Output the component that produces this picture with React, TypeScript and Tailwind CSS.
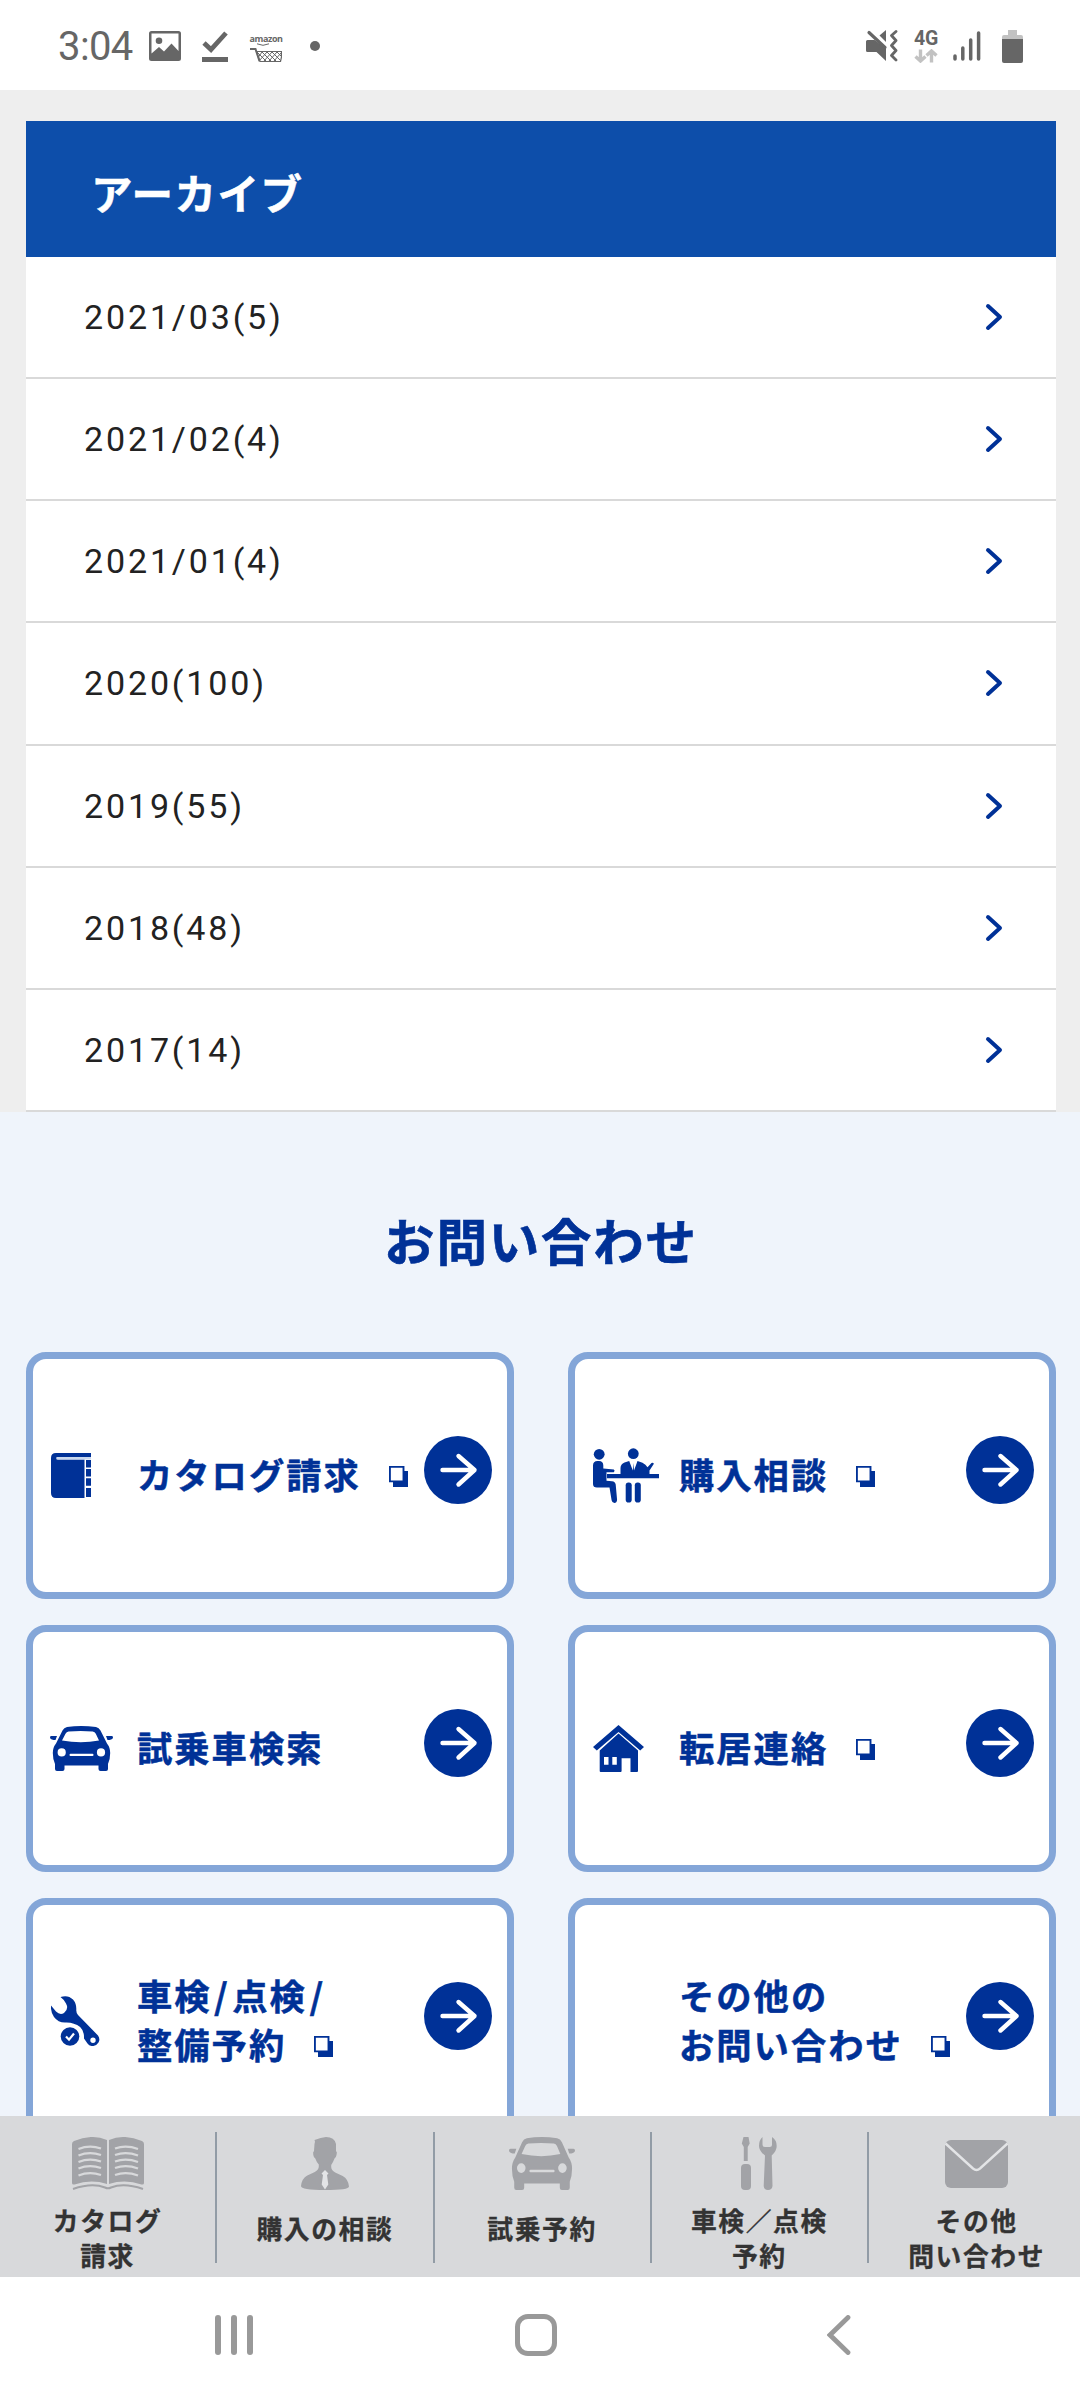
import React from 'react';

const archives = [
    '2021/03(5)',
    '2021/02(4)',
    '2021/01(4)',
    '2020(100)',
    '2019(55)',
    '2018(48)',
    '2017(14)',
];

/* ---------- Status bar ---------- */

const AmazonCart = () => (
    <div className="flex flex-col items-center w-8 text-[#666]">
        <span className="font-['Open_Sans',sans-serif] text-[9px] leading-[8px] font-bold tracking-[-0.4px]">amazon</span>
        <svg viewBox="0 0 32 19" className="w-8 h-[19px]" fill="none" stroke="currentColor">
            <path d="M7 0.8q6 3 12 0" strokeWidth="1" />
            <path d="M0 6h5.5l4 12.3" strokeWidth="2" />
            <path d="M6.500 8.500H31.500V14l-1 4.500H10z" strokeWidth="1.200" />
            <path d="M7 9l9 9M12 9l9 9M17 9l9 9M22 9l9 9M27 9l4 4M12 9l-3.500 5M17 9l-8 9M22 9l-8 9M27 9l-8 9M31 10l-7 8" strokeWidth="1" />
        </svg>
    </div>
);

const StatusBar = () => (
    <header className="h-[90px] shrink-0 bg-white flex items-center justify-between pl-[58px] pr-[57px] pt-[2px] text-[#666]">
        <div className="flex items-center">
            <span className="font-[Roboto,sans-serif] text-[40px] leading-[40px] w-[91px] tracking-[-0.6px] pt-[2px]">3:04</span>
            <svg viewBox="0 0 32 30" className="w-8 h-[30px]">
                <path fill="currentColor" fillRule="evenodd" d="M2.500 0h27A2.500 2.500 0 0 1 32 2.500v25a2.500 2.500 0 0 1-2.500 2.500h-27A2.500 2.500 0 0 1 0 27.500v-25A2.500 2.500 0 0 1 2.500 0zM2.500 2.500v20L10 16l5 4.500 7.500-8 7 7.500V2.500zM10 6.500a3.300 3.300 0 1 1 0 6.600 3.300 3.300 0 0 1 0-6.600z" />
            </svg>
            <svg viewBox="0 0 26 31" className="w-[26px] h-[31px] ml-[21px]">
                <path d="M2 12l7 6.500L24 2" fill="none" stroke="currentColor" strokeWidth="4.800" />
                <path d="M0 26h26v5H0z" fill="currentColor" />
            </svg>
            <div className="ml-[22px] mt-1"><AmazonCart /></div>
            <span className="ml-7 w-[10px] h-[10px] rounded-full bg-[#666]" />
        </div>
        <div className="flex items-center">
            <svg viewBox="0 0 32 32" className="w-8 h-8" fill="currentColor">
                <path d="M1.500 10H8.500L20 18.500V31L10.500 22H1.500Q0 22 0 20.500v-9Q0 10 1.500 10z" />
                <path d="M20 0v12l-6.500-6.500z" />
                <path d="M3 2.500l16 15" stroke="currentColor" strokeWidth="3.200" strokeLinecap="round" />
                <path d="M30 1.500l-4.500 4 4.500 5-4.500 5 4.500 5-4.500 5 4.500 4.500" fill="none" stroke="currentColor" strokeWidth="2.800" strokeLinecap="round" strokeLinejoin="round" />
            </svg>
            <div className="flex flex-col items-center w-6 ml-[16px] mr-px">
                <span className="font-[Roboto,sans-serif] text-[19.500px] leading-[17px] font-bold tracking-[-0.3px]">4G</span>
                <svg viewBox="0 0 24 14" className="w-6 h-[14px] mt-[2px]" fill="none" stroke="#c2c2c2" strokeWidth="3.400">
                    <path d="M6.500 0.500v11M1.500 7.500l5 4.500 5-4.500M17.500 13.500v-11M12.500 6.500l5-4.500 5 4.500" />
                </svg>
            </div>
            <svg viewBox="0 0 28 30" className="w-7 h-[30px] ml-[14px]" stroke="currentColor" strokeWidth="3.500" strokeLinecap="round">
                <path d="M2 25v3M9.800 17v11M17.700 9v19M25.600 2v26" />
            </svg>
            <svg viewBox="0 0 21 33" className="w-[21px] h-[33px] ml-[21px]">
                <path d="M6 0h9v5h4q2 0 2 2v3H0V7q0-2 2-2h4z" fill="#c2c2c2" />
                <path d="M0 9h21v22q0 2-2 2H2q-2 0-2-2z" fill="currentColor" />
            </svg>
        </div>
    </header>
);

/* ---------- Contact card icons ---------- */

const NotebookIcon = () => (
    <svg viewBox="0 0 40 45" className="w-[40px] h-[45px]" fill="currentColor">
        <path d="M5 0h35v4H7.500Q5.500 4 5.500 5.200T7.500 6.500H33.500V45H5q-5 0-5-5V5q0-5 5-5z" />
        <path d="M5.500 4H40v2.500H5.500z" fill="#c9d8ef" />
        <path d="M35 7h5v7.500h-5zM35 16h5v7.500h-5zM35 25.300h5v7.500h-5zM35 35h5v9h-5z" />
    </svg>
);

const ConsultIcon = () => (
    <svg viewBox="0 0 66 55" className="w-[66px] h-[55px]" fill="currentColor">
        <circle cx="6.200" cy="6.300" r="5.400" />
        <path d="M0 17.500q0-4.500 4.500-4.500h1.500q4.300 0 4.300 4.500v3l10.500 1q1.700 1.200 0 2.700h-7.300v8.600l5.500.5q3.200.2 3.700 3.200l1.400 15.500q-.4 3-2.700 3t-2.800-2.700L16.500 39.500H4Q0 39.500 0 36z" />
        <path d="M14 26h52v4.300H14z" />
        <circle cx="40.300" cy="5.700" r="5.400" />
        <path d="M27.500 26v-6q0-4 4-5.500l4.700-1.500 3.600 9.500.5-7.500.7 7.500 3.500-9.500 5 1.700q3.300 1.600 5 4.500l4-4.200q1.600-.7 2.400.8L56.500 22.500V26z" />
        <rect x="32.700" y="34.500" width="6" height="20" rx="2.800" />
        <rect x="41.800" y="34.500" width="6" height="20" rx="2.800" />
    </svg>
);

const CarIcon = ({ className }: { className: string }) => (
    <svg viewBox="0 0 63 45" preserveAspectRatio="none" className={className} fill="currentColor">
        <path fillRule="evenodd" d="M17 1Q31-1 46 1q3 .5 4.500 3.500L57 17.500q3.200 4 3.200 9.500 0 6-2.200 11v5q0 2-2 2h-5.500q-2 0-2-2v-3.500h-34V43q0 2-2 2H7q-2 0-2-2v-5Q2.800 33 2.800 27q0-5.500 3.200-9.500L12.500 4.500Q14 1.500 17 1zM18.500 5.500q-2 .3-3 2.200L12 14.500q19 3.500 37 0l-3.200-6.800q-1-2-3-2.200Q30.500 4.500 18.500 5.500zM11.700 22.300a4.100 4.100 0 1 0 0 8.200 4.100 4.100 0 0 0 0-8.200zM51 22.300a4.100 4.100 0 1 0 0 8.200 4.100 4.100 0 0 0 0-8.200zM20.500 27.800q-1 0-1 1.100t1 1.100h22q1 0 1-1.100t-1-1.100z" />
        <path d="M1.500 10H7l-1.500 4H3.500Q0 13.500 0 11.300 0 10 1.500 10zM61.500 10H56l1.500 4h2Q63 13.500 63 11.300 63 10 61.500 10z" />
    </svg>
);

const HouseIcon = () => (
    <svg viewBox="0 0 51 47" className="w-[51px] h-[47px]" fill="currentColor">
        <path d="M25.500 0L51 22l-3.800 3.600L25.500 7 3.800 25.600 0 22z" />
        <path fillRule="evenodd" d="M25.500 8.500L45 25.500V46q0 1-1 1H37.500V33.300H28.600V46q0 1-1 1H7.700q-1 0-1-1V25.500zM11 32v7.800h4.500V32zM19.300 32v7.800h4.500V32z" />
    </svg>
);

const WrenchCheckIcon = () => (
    <svg viewBox="0 0 49 50" className="w-[49px] h-[50px]">
        <path fill="currentColor" fillRule="evenodd" d="M9.500 1Q17-1.500 22 3.500q3.500 4 3.300 10-.3 3 1.700 5.500L47 39.500q2.500 3.500.5 7-2.500 4-7 3.500-2.500-.3-4-2.500L33 42.500Q33.500 30 22 27.500 19.500 26.300 14 26.500 7 26.500 3 21-.5 16 0 9.500L5 15.500q4 4 8 1.500 5-4 2-9.500Q13 3.500 9.500 1zM42 41.500a2.700 2.700 0 1 0 0 5.400 2.700 2.700 0 0 0 0-5.400z" />
        <circle cx="19" cy="40.500" r="9.300" fill="currentColor" />
        <path d="M15 40.500l3 3.200 5-6.200" fill="none" stroke="#fff" strokeWidth="2.200" />
    </svg>
);

const NewWindowIcon = () => (
    <svg viewBox="0 0 19 21" className="w-[19px] h-[21px] shrink-0 ml-[28px] mt-[6px]">
        <path d="M4 5h15v16H4z" fill="currentColor" />
        <path d="M0.900 0.900h13.600v14.500H0.900z" fill="#fff" stroke="currentColor" strokeWidth="1.900" />
    </svg>
);

const CircleArrow = () => (
    <svg viewBox="0 0 68 68" className="w-[68px] h-[68px] shrink-0 mb-[11px] ml-auto">
        <circle cx="34" cy="34" r="34" fill="currentColor" />
        <path d="M18.500 34h32M34.500 20L50.500 34l-16 14.500" fill="none" stroke="#fff" strokeWidth="4.400" strokeLinecap="round" strokeLinejoin="round" />
    </svg>
);

type Contact = { icon?: React.ReactNode; lines: React.ReactNode[]; external?: boolean };

const slash = <span className="mx-[2.500px]">/</span>;

const contacts: Contact[] = [
    { icon: <NotebookIcon />, lines: ['カタログ請求'], external: true },
    { icon: <ConsultIcon />, lines: ['購入相談'], external: true },
    { icon: <CarIcon className="w-[63px] h-[45px] -ml-px" />, lines: ['試乗車検索'] },
    { icon: <HouseIcon />, lines: ['転居連絡'], external: true },
    { icon: <WrenchCheckIcon />, lines: [<>車検{slash}点検{slash}</>, '整備予約'], external: true },
    { lines: ['その他の', 'お問い合わせ'], external: true },
];

const ContactCard = ({ icon, lines, external }: Contact) => (
    <a className="h-[247px] rounded-[20px] border-[7px] border-[#84a6d8] bg-white flex items-center pl-[18px] pr-[15px] text-[#003197]">
        <div className="w-[86px] shrink-0">{icon}</div>
        <div className="shrink-0 mb-[4px] text-[35.300px] leading-[49px] font-bold tracking-[2px] whitespace-nowrap [-webkit-text-stroke:0.5px]">
            {lines.map((line, i) => (
                <div key={i} className="flex items-center">
                    <span>{line}</span>
                    {external && i === lines.length - 1 && <NewWindowIcon />}
                </div>
            ))}
        </div>
        <CircleArrow />
    </a>
);

/* ---------- Fixed footer menu icons ---------- */

const OpenBookIcon = () => (
    <svg viewBox="0 0 72 53" className="w-[72px] h-[53px]">
        <path fill="currentColor" d="M0 7q0-2 2-3Q19-3.500 35 3v44Q19 42 2.500 47.500 0 48 0 46zM72 7q0-2-2-3Q53-3.500 37 3v44q16-5 32.500.5Q72 48 72 46z" />
        <path d="M1 52q19-6.500 32-1.500 3 1.500 6 0 13-5 32 1.500" fill="none" stroke="currentColor" strokeWidth="2" />
        <path d="M6.500 12q11-4.500 22.500-.5M6.500 18.500q11-4.500 22.500-.5M6.500 25q11-4.500 22.500-.5M6.500 31.500q11-4.500 22.500-.5M6.500 38.500q11-4.500 22.500-.5M43 11.500q11-4 23 .5M43 18q11-4 23 .5M43 24.500q11-4 23 .5M43 31q11-4 23 .5M43 38q11-4 23 .5" fill="none" stroke="#d8d9db" strokeWidth="2.300" />
    </svg>
);

const PersonIcon = () => (
    <svg viewBox="0 0 48 53" className="w-[48px] h-[53px]">
        <path fill="currentColor" d="M13.500 3Q20 .5 25 0q8.500 0 10 7v7q1.500 1 .5 4-.5 3-2 3.500-1.500 4-3.300 6.500v2q0 3 4 5.500l7.500 3.500q5.500 3 6.300 10.500Q48 53 24 53T0 49q.8-7.500 6.300-10.500l7.500-3.500q4-2.500 4-5.500v-2Q15.500 25 14.300 21.500q-1.500-.5-2-3.500-.7-3 .7-4l.5-7q1-2.500 0-4z" />
        <path fill="#e3e4e6" d="M24 33l3.500 3.500-1.500 1.500 1.300 9.500L24 52.500l-3.300-5L22 38l-1.500-1.500z" />
    </svg>
);

const ToolsIcon = () => (
    <svg viewBox="0 0 36 53" className="w-[36px] h-[53px]" fill="currentColor">
        <path d="M2.500 0h5l1.200 6.500-2 3.500v14H2.800V10L.8 6.500z" />
        <rect x="0" y="27" width="10" height="26" rx="4" />
        <path d="M21.500 0v7.500q0 2.500 2.500 2.500h4.500q2.500 0 2.500-2.500V0q4.700 3 4.700 9 0 5-5 9.500L31.500 49q-.5 4-4.500 4t-4.300-4L24 18.500q-6-4.500-6-9.500 0-6 3.500-9z" />
    </svg>
);

const MailIcon = () => (
    <svg viewBox="0 0 63 48" className="w-[63px] h-[48px]">
        <rect width="63" height="48" rx="6" fill="currentColor" />
        <path d="M0.500 3.500L28 28.500q3.500 3 7 0L62.500 3.500" fill="none" stroke="#e3e4e6" strokeWidth="2.400" />
    </svg>
);

const menu = [
    { icon: <OpenBookIcon />, lines: ['カタログ', '請求'] },
    { icon: <PersonIcon />, lines: ['購入の相談'] },
    { icon: <CarIcon className="w-[66px] h-[53px]" />, lines: ['試乗予約'] },
    { icon: <ToolsIcon />, lines: ['車検／点検', '予約'] },
    { icon: <MailIcon />, lines: ['その他', '問い合わせ'] },
];

const FooterMenu = () => (
    <nav className="h-[161px] shrink-0 bg-[#d8d9db] flex items-start pt-4 overflow-hidden">
        {menu.map(({ icon, lines }) => (
            <a key={lines[0]} className="w-[217.250px] h-[131px] shrink-0 border-r-2 border-[#929ca6] flex flex-col items-center">
                <div className="h-[53px] shrink-0 mt-[5px] flex items-center text-[#a2a3a7]">{icon}</div>
                <div
                    className={`text-[25.800px] leading-[35.300px] font-bold tracking-[1.600px] text-center text-[#333] whitespace-nowrap [-webkit-text-stroke:0.3px] ${lines.length > 1 ? 'mt-[12px]' : 'mt-[20px]'}`}
                >
                    {lines.map((line) => <div key={line}>{line}</div>)}
                </div>
            </a>
        ))}
    </nav>
);

const SystemNav = () => (
    <footer className="h-[123px] shrink-0 bg-white flex items-start pt-[37px] pl-[215px]">
        <div className="flex gap-[10.500px] w-[300px] pt-px">
            <span className="w-[5.500px] h-10 rounded-full bg-[#999]" />
            <span className="w-[5.500px] h-10 rounded-full bg-[#999]" />
            <span className="w-[5.500px] h-10 rounded-full bg-[#999]" />
        </div>
        <span className="w-[42px] h-[42px] rounded-[13px] border-[5px] border-[#999]" />
        <svg viewBox="0 0 24 40" className="w-6 h-10 ml-[270px] mt-px" fill="none" stroke="#999" strokeWidth="4.800" strokeLinecap="round">
            <path d="M21 2.500L3 20l18 17.500" />
        </svg>
    </footer>
);

export default function App() {
    return (
        <div className="w-[1080px] h-[2400px] flex flex-col overflow-hidden bg-white font-['Noto_Sans_CJK_JP',sans-serif]">
            <StatusBar />

            <main className="flex-1 min-h-0 overflow-hidden">
                {/* Archive list */}
                <section className="bg-[#eee] pt-[31px] pl-[26px] pr-6">
                    <h2 className="h-[136px] bg-[#0d4eaa] text-white text-[41.500px] font-bold tracking-[1.500px] flex items-center pl-[65px] pt-[7px] [-webkit-text-stroke:0.5px]">アーカイブ</h2>
                    <ul>
                        {archives.map((label) => (
                            <li key={label} className="h-[122.140px] bg-white border-b-2 border-[#d9d9d9] flex items-center justify-between pl-[58px] pr-[53px]">
                                <span className="font-[Roboto,sans-serif] text-[34px] leading-none tracking-[2.850px] text-[#222]">{label}</span>
                                <svg viewBox="0 0 18 28" className="w-[18px] h-7" fill="none" stroke="#003197" strokeWidth="4" strokeLinecap="round" strokeLinejoin="round">
                                    <path d="M3 3l12 11L3 25" />
                                </svg>
                            </li>
                        ))}
                    </ul>
                </section>

                {/* Contact */}
                <section className="bg-[#eff4fb] pl-[26px] pr-6 pb-10">
                    <h2 className="h-[240px] flex items-center justify-center pt-[15px] text-[50.500px] font-bold tracking-[1.800px] text-[#003197] [-webkit-text-stroke:0.6px]">お問い合わせ</h2>
                    <div className="grid grid-cols-2 gap-x-[54px] gap-y-[26px]">
                        {contacts.map((contact, i) => <ContactCard key={i} {...contact} />)}
                    </div>
                </section>
            </main>

            <FooterMenu />
            <SystemNav />
        </div>
    );
}
